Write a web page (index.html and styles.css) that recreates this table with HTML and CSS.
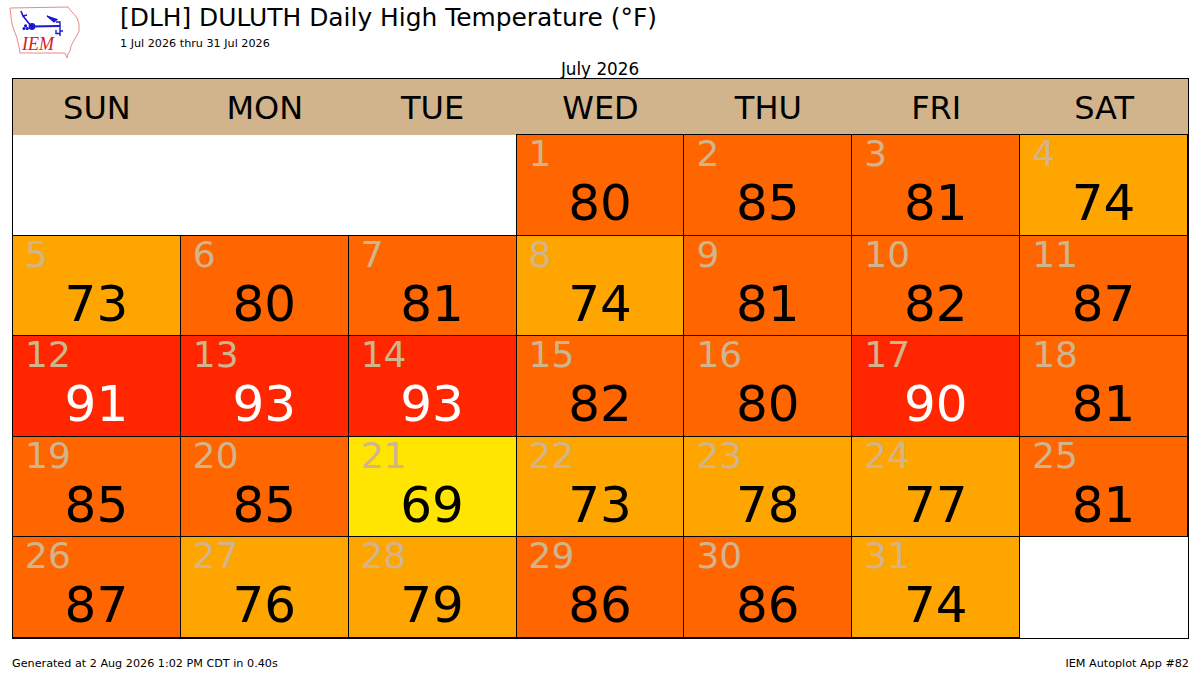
FILE: index.html
```html
<!DOCTYPE html>
<html>
<head>
<meta charset="utf-8">
<link rel="stylesheet" href="styles.css">
</head>
<body>
<div class="top">
  <div class="logo">
    <svg width="84" height="62" viewBox="0 0 84 62">
      <path class="iowa" d="M10 8 L68 7 L70 10 L74 14 L77 18 L79 24 L79 31 L76 37 L73 42 L71 46 L70 51 L68 54 L67 58 L65 53 L20 53 L19 47 L17 38 L14 30 L12 24 L11 17 Z"/>
      <g class="vane">
        <path d="M21 11 L23 16 L27 15 M23 16 L31 26" fill="none" stroke-width="1.6"/>
        <circle cx="32" cy="26.5" r="2.8"/>
        <path d="M32 26.5 L60 26" fill="none" stroke-width="2"/>
        <path d="M47 16 L57 19.5 L54 22 Z"/>
        <path d="M56 22 L60 22 L60 36" fill="none" stroke-width="1.4"/>
        <path d="M56 30 L56 33.5 L60 33.5 M60 31 L63 31" fill="none" stroke-width="1.4"/>
        <circle cx="24" cy="28.5" r="1"/>
        <circle cx="27.3" cy="28.5" r="1"/>
        <circle cx="25.6" cy="25.8" r="1"/>
      </g>
      <text x="22" y="50" class="iem">IEM</text>
    </svg>
  </div>
  <div class="titles">
    <div class="title">[DLH] DULUTH Daily High Temperature (°F)</div>
    <div class="subtitle">1 Jul 2026 thru 31 Jul 2026</div>
  </div>
</div>
<div class="month">July 2026</div>
<div class="cal">
  <div class="hd">SUN</div><div class="hd">MON</div><div class="hd">TUE</div><div class="hd">WED</div><div class="hd">THU</div><div class="hd">FRI</div><div class="hd">SAT</div>

  <div class="empty"></div><div class="empty"></div><div class="empty"></div>
  <div class="cell c2"><div class="dn">1</div><div class="v">80</div></div>
  <div class="cell c2"><div class="dn">2</div><div class="v">85</div></div>
  <div class="cell c2"><div class="dn">3</div><div class="v">81</div></div>
  <div class="cell c1"><div class="dn">4</div><div class="v">74</div></div>

  <div class="cell c1"><div class="dn">5</div><div class="v">73</div></div>
  <div class="cell c2"><div class="dn">6</div><div class="v">80</div></div>
  <div class="cell c2"><div class="dn">7</div><div class="v">81</div></div>
  <div class="cell c1"><div class="dn">8</div><div class="v">74</div></div>
  <div class="cell c2"><div class="dn">9</div><div class="v">81</div></div>
  <div class="cell c2"><div class="dn">10</div><div class="v">82</div></div>
  <div class="cell c2"><div class="dn">11</div><div class="v">87</div></div>

  <div class="cell c3"><div class="dn">12</div><div class="v">91</div></div>
  <div class="cell c3"><div class="dn">13</div><div class="v">93</div></div>
  <div class="cell c3"><div class="dn">14</div><div class="v">93</div></div>
  <div class="cell c2"><div class="dn">15</div><div class="v">82</div></div>
  <div class="cell c2"><div class="dn">16</div><div class="v">80</div></div>
  <div class="cell c3"><div class="dn">17</div><div class="v">90</div></div>
  <div class="cell c2"><div class="dn">18</div><div class="v">81</div></div>

  <div class="cell c2"><div class="dn">19</div><div class="v">85</div></div>
  <div class="cell c2"><div class="dn">20</div><div class="v">85</div></div>
  <div class="cell c0"><div class="dn">21</div><div class="v">69</div></div>
  <div class="cell c1"><div class="dn">22</div><div class="v">73</div></div>
  <div class="cell c1"><div class="dn">23</div><div class="v">78</div></div>
  <div class="cell c1"><div class="dn">24</div><div class="v">77</div></div>
  <div class="cell c2"><div class="dn">25</div><div class="v">81</div></div>

  <div class="cell c2"><div class="dn">26</div><div class="v">87</div></div>
  <div class="cell c1"><div class="dn">27</div><div class="v">76</div></div>
  <div class="cell c1"><div class="dn">28</div><div class="v">79</div></div>
  <div class="cell c2"><div class="dn">29</div><div class="v">86</div></div>
  <div class="cell c2"><div class="dn">30</div><div class="v">86</div></div>
  <div class="cell c1"><div class="dn">31</div><div class="v">74</div></div>
  <div class="empty"></div>
</div>
<div class="footer">
  <span>Generated at 2 Aug 2026 1:02 PM CDT in 0.40s</span>
  <span>IEM Autoplot App #82</span>
</div>
</body>
</html>
```
FILE: styles.css
```css
html, body {
  margin: 0;
  padding: 0;
  background: #fff;
}
body {
  width: 1200px;
  height: 675px;
  overflow: hidden;
  font-family: "DejaVu Sans", sans-serif;
  color: #000;
}
.top {
  display: flex;
  height: 60px;
}
.logo {
  width: 120px;
  flex: none;
}
.logo svg {
  display: block;
}
.iowa {
  fill: #fff;
  stroke: #e88a8a;
  stroke-width: 1;
}
.vane {
  fill: #1a1acc;
  stroke: #1a1acc;
  stroke-width: 1.2;
}
.iem {
  font-family: "Liberation Serif", serif;
  font-style: italic;
  font-size: 18px;
  fill: #d42020;
}
.titles {
  padding-top: 6px;
}
.title {
  font-size: 24.9px;
  line-height: 24.5px;
  white-space: nowrap;
}
.subtitle {
  font-size: 11.2px;
  line-height: 11.2px;
  margin-top: 7px;
}
.month {
  height: 18px;
  line-height: 18px;
  font-size: 16.8px;
  text-align: center;
}
.cal {
  box-sizing: border-box;
  margin-left: 12px;
  width: 1177px;
  height: 561px;
  border: 1px solid #000;
  display: grid;
  grid-template-columns: repeat(7, 1fr);
  grid-template-rows: 56px repeat(5, 1fr);
}
.hd {
  background: #d2b48c;
  font-size: 32px;
  display: flex;
  align-items: center;
  justify-content: center;
  padding-top: 1px;
}
.empty {
  background: #fff;
}
.cell {
  border: 1px solid #000;
  margin: -1px 0 0 -1px;
}
.dn {
  font-size: 36px;
  line-height: 36px;
  color: #d2b48c;
  padding: 1px 0 0 12px;
}
.v {
  font-size: 50px;
  line-height: 50px;
  text-align: center;
  margin-top: 6px;
}
.c0 { background: #ffe500; }
.c1 { background: #ffa500; }
.c2 { background: #ff6600; }
.c3 { background: #ff2600; }
.c3 .v { color: #fff; }
.footer {
  display: flex;
  justify-content: space-between;
  width: 1177px;
  margin: 19px 0 0 12px;
  font-size: 11.2px;
  line-height: 12px;
}
```
